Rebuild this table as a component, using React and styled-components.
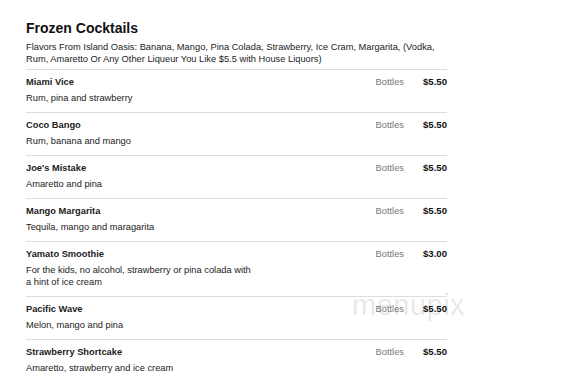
import React from 'react'
import styled, { createGlobalStyle } from 'styled-components'

const GlobalStyle = createGlobalStyle`
    html, body {
        margin: 0;
        padding: 0;
        background: #ffffff;
    }
    body {
        font-family: 'Liberation Sans', Arial, sans-serif;
        color: #222222;
    }
`

const items = [
    { name: 'Miami Vice', description: 'Rum, pina and strawberry', kind: 'Bottles', price: '$5.50' },
    { name: 'Coco Bango', description: 'Rum, banana and mango', kind: 'Bottles', price: '$5.50' },
    { name: "Joe's Mistake", description: 'Amaretto and pina', kind: 'Bottles', price: '$5.50' },
    { name: 'Mango Margarita', description: 'Tequila, mango and maragarita', kind: 'Bottles', price: '$5.50' },
    {
        name: 'Yamato Smoothie',
        description: 'For the kids, no alcohol, strawberry or pina colada with a hint of ice cream',
        kind: 'Bottles',
        price: '$3.00',
    },
    { name: 'Pacific Wave', description: 'Melon, mango and pina', kind: 'Bottles', price: '$5.50' },
    { name: 'Strawberry Shortcake', description: 'Amaretto, strawberry and ice cream', kind: 'Bottles', price: '$5.50' },
]

const Page = styled.main`
    position: relative;
    width: 421px;
    padding: 20px 0 0 26px;
`
const SectionTitle = styled.h2`
    margin: 0;
    font-size: 14px;
    line-height: 17px;
    font-weight: 700;
    color: #111111;
`
const SectionNote = styled.p`
    margin: 3.5px 0 0;
    padding-bottom: 3.5px;
    font-size: 9.3px;
    line-height: 12.3px;
    color: #222222;
`
const ItemList = styled.ul`
    list-style: none;
    margin: 0;
    padding: 0;
`
const ItemRow = styled.li`
    display: flex;
    align-items: flex-start;
    border-top: 1px solid #dddddd;
    padding: 6px 0 8px;
    font-size: 9.3px;
    line-height: 12px;
`
const ItemInfo = styled.div`
    flex: 1;
    display: flex;
    flex-direction: column;
    gap: 4px;
`
const ItemName = styled.span`
    font-weight: 700;
    color: #222222;
`
const ItemText = styled.span`
    max-width: 232px;
    color: #222222;
`
const ItemKind = styled.span`
    color: #777777;
`
const ItemPrice = styled.span`
    width: 43px;
    text-align: right;
    font-size: 9.6px;
    font-weight: 700;
    color: #111111;
`
const Watermark = styled.div`
    position: absolute;
    left: 352px;
    top: 289px;
    font-size: 29px;
    font-weight: 300;
    letter-spacing: 0.5px;
    color: rgba(0, 0, 0, 0.1);
    pointer-events: none;
`

function MenuItem({ item }) {
    return (
        <ItemRow>
            <ItemInfo>
                <ItemName>{item.name}</ItemName>
                <ItemText>{item.description}</ItemText>
            </ItemInfo>
            <ItemKind>{item.kind}</ItemKind>
            <ItemPrice>{item.price}</ItemPrice>
        </ItemRow>
    )
}

function App() {
    return (
        <>
            <GlobalStyle />
            <Page>
                <SectionTitle>Frozen Cocktails</SectionTitle>
                <SectionNote>
                    Flavors From Island Oasis: Banana, Mango, Pina Colada, Strawberry, Ice Cram, Margarita, (Vodka,
                    Rum, Amaretto Or Any Other Liqueur You Like $5.5 with House Liquors)
                </SectionNote>
                <ItemList>
                    {items.map((item) => (
                        <MenuItem key={item.name} item={item} />
                    ))}
                </ItemList>
            </Page>
            <Watermark>menupix</Watermark>
        </>
    )
}

export default App
